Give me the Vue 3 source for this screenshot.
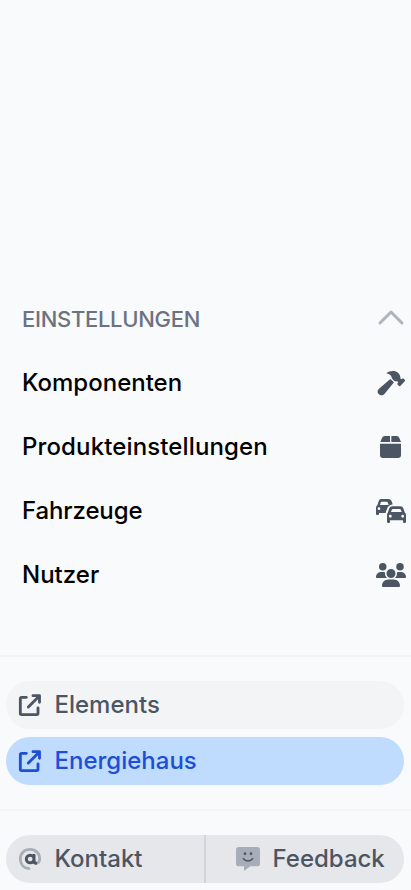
<script setup>
const entries = [
  { label: 'Komponenten', icon: 'hammer', box: '45 24 90 90', spacing: 'normal' },
  { label: 'Produkteinstellungen', icon: 'box', box: '45 30 90 90', spacing: 'wide' },
  { label: 'Fahrzeuge', icon: 'cars', box: '45 30 90 90', spacing: 'tight' },
  { label: 'Nutzer', icon: 'users', box: '0 -64 640 640', spacing: 'normal' },
]
const links = [
  { label: 'Elements', active: false },
  { label: 'Energiehaus', active: true },
]
</script>

<template>
  <aside class="sidebar">
    <nav class="settings">
      <div class="row heading">
        <span>EINSTELLUNGEN</span>
        <svg class="icon chevron" viewBox="45 27 90 90"><path d="M57 84L90 51L123 84" /></svg>
      </div>
      <div v-for="entry in entries" :key="entry.label" class="row">
        <span :class="entry.spacing">{{ entry.label }}</span>
        <svg class="icon" :viewBox="entry.box">
          <template v-if="entry.icon === 'hammer'">
            <path d="M76 40C84 32 103 30 111 38C116 43 119 49 118 55L121 58L124 56Q126 54 128 56L132 60Q133 62 131 64L118 78Q116 80 114 78L109 73Q108 71 110 69L112 67L109 64C105 65 100 64 97 60L92 54V51C89 45 84 42 76 40Z" />
            <path d="M88 57L99 67L71 101C65 107 57 107 53 102C48 97 49 90 54 86Z" />
          </template>
          <template v-else-if="entry.icon === 'box'">
            <path d="M72 42H87V60H58L63 48Q65 42 72 42ZM91 42H107Q113 42 115 48L120 60H91Z" />
            <path d="M57 65H120V99Q120 108 111 108H66Q57 108 57 99Z" />
          </template>
          <template v-else-if="entry.icon === 'cars'">
            <path fill-rule="evenodd" d="M60 39H82Q89 39 92 46L95 55Q85 56 80 64L77 72Q74 75 74 81H54V84Q54 87 51 87H48Q45 87 45 84V65Q45 61 49 58L53 46Q55 39 60 39ZM62 47Q60 47 59 50L57 57H83L80 49Q79 47 77 47ZM54 64A4 4 0 1 0 54 72A4 4 0 1 0 54 64Z" />
            <path fill-rule="evenodd" d="M94 61H118Q125 61 127 67L131 79Q135 82 135 87V107Q135 111 131 111H129Q126 111 126 107V103H87V107Q87 111 84 111H82Q78 111 78 107V87Q78 82 81 79L85 67Q87 61 94 61ZM96 69Q93 69 92 72L90 78H122L120 72Q119 69 116 69ZM88 86.500A4.200 4.200 0 1 0 88 95A4.200 4.200 0 1 0 88 86.500ZM125 86.500A4.200 4.200 0 1 0 125 95A4.200 4.200 0 1 0 125 86.500Z" />
          </template>
          <path
            v-else
            d="M144 0a80 80 0 1 1 0 160A80 80 0 1 1 144 0zM512 0a80 80 0 1 1 0 160A80 80 0 1 1 512 0zM0 298.700C0 239.800 47.800 192 106.700 192l42.700 0c15.900 0 31 3.500 44.600 9.700c-1.300 7.200-1.900 14.700-1.900 22.300c0 38.200 16.800 72.500 43.300 96c-.2 0-.4 0-.7 0L21.300 320C9.600 320 0 310.400 0 298.700zM405.300 320c-.2 0-.4 0-.7 0c26.600-23.500 43.300-57.800 43.300-96c0-7.600-.7-15-1.900-22.300c13.600-6.300 28.700-9.700 44.600-9.700l42.700 0C592.200 192 640 239.800 640 298.700c0 11.800-9.600 21.300-21.300 21.300l-213.300 0zM224 224a96 96 0 1 1 192 0 96 96 0 1 1 -192 0zM128 485.300C128 411.700 187.700 352 261.300 352l117.300 0C452.300 352 512 411.700 512 485.300c0 14.700-11.900 26.700-26.700 26.700l-330.700 0c-14.700 0-26.700-11.900-26.700-26.700z"
          />
        </svg>
      </div>
    </nav>

    <div class="links">
      <a v-for="link in links" :key="link.label" class="pill" :class="{ active: link.active }">
        <svg class="small external" viewBox="54 144 72 72">
          <path d="M79 157H65Q61 157 61 161V205Q61 209 65 209H110Q114 209 114 205V189" />
          <path d="M85 186L115 156M99 152H118.500V172" />
        </svg>
        <span>{{ link.label }}</span>
      </a>
    </div>

    <div class="support">
      <div class="pair">
        <a class="half">
          <svg class="small at" viewBox="54 141 72 72">
            <path class="ring" d="M87 206C72 205 61 194 61 177C61 160 73 148 90 148C107 148 119 160 119 176C119 185 116 189 109 189Q106 189 104 187" />
            <path class="letter" d="M102 166V181Q102 189 107 190M102 177A11.500 11.500 0 1 1 79 177A11.500 11.500 0 1 1 102 177" />
          </svg>
          <span>Kontakt</span>
        </a>
        <a class="half feedback">
          <svg class="small face" viewBox="108 141 72 72">
            <path class="bubble" d="M116 141H172Q180 141 180 149V191Q180 199 172 199H151L132 213V199H116Q108 199 108 191V149Q108 141 116 141Z" />
            <circle cx="135" cy="161" r="4" /><circle cx="153" cy="161" r="4" />
            <path class="smile" d="M130 176Q144 190 158 176" />
          </svg>
          <span>Feedback</span>
        </a>
      </div>
    </div>
  </aside>
</template>

<style>
body { background: #f9fafc; }
</style>

<style scoped>
.sidebar {
  box-sizing: border-box;
  width: 100%;
  height: 890px;
  padding-top: 287px;
  overflow: hidden;
  background: #f9fafc;
  font: 500 24px/32px Inter, sans-serif;
  color: #4b5563;
}
.settings { height: 368px; }
.row {
  display: flex;
  align-items: center;
  justify-content: space-between;
  height: 64px;
  padding: 0 5px 0 22px;
}
.row > span { color: #000; }
.row > .wide { letter-spacing: 0.13px; }
.row > .tight { letter-spacing: -0.12px; }
.row.heading > span { font-size: 22px; letter-spacing: -0.3px; color: #6b7280; }
.icon { width: 30px; height: 30px; flex: none; fill: #4b5563; }
.chevron { fill: none; stroke: #b0b4bc; stroke-width: 9; stroke-linecap: round; stroke-linejoin: round; }
.links {
  display: flex;
  flex-direction: column;
  gap: 8px;
  padding: 24px 7px 24px 6px;
  border-top: 2px solid #f3f4f6;
}
.pill {
  display: flex;
  align-items: center;
  gap: 12.5px;
  height: 48px;
  padding-left: 12px;
  border-radius: 24px;
  background: #f3f4f6;
}
.pill.active { background: #bfdbfe; color: #1d4ed8; }
.small { width: 24px; height: 24px; flex: none; }
.external { fill: none; stroke: currentColor; stroke-width: 8.5; stroke-linecap: round; stroke-linejoin: round; }
.support { padding: 24px 7px 0 6px; border-top: 2px solid #f3f4f6; }
.pair {
  display: flex;
  height: 48px;
  border-radius: 24px;
  background: #e5e7eb;
}
.half {
  box-sizing: border-box;
  display: flex;
  align-items: center;
  gap: 12.5px;
  width: 198px;
  padding-left: 12px;
}
.half.feedback { width: 200px; padding-left: 30px; border-left: 2px solid #d1d5db; }
.at { fill: none; }
.ring { stroke: #a7aeb8; stroke-width: 8.5; stroke-linecap: round; }
.letter { stroke: #4b5563; stroke-width: 9; stroke-linecap: round; }
.face { fill: #4b5563; }
.bubble { fill: #a7aeb8; }
.smile { fill: none; stroke: #4b5563; stroke-width: 4.5; stroke-linecap: round; }
</style>
